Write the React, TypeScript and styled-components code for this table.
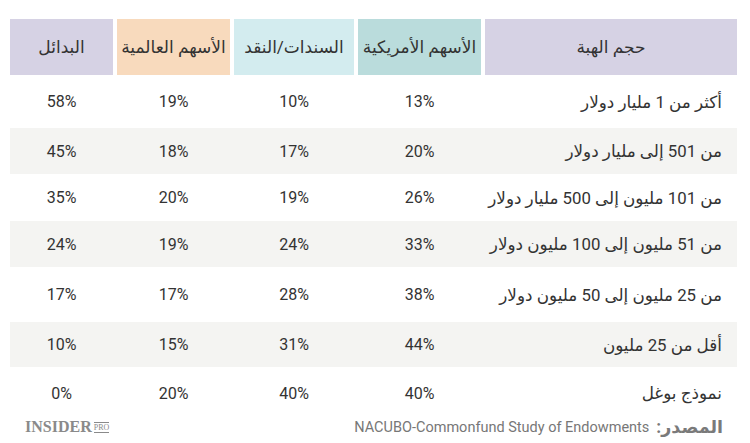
import React from 'react';
import styled, { createGlobalStyle } from 'styled-components';

const GlobalStyle = createGlobalStyle`
    html, body {
        margin: 0;
        padding: 0;
        background: #ffffff;
    }
`;

const COLUMNS = '252px 123px 120px 113px 103px';

const Page = styled.div`
    width: 750px;
    height: 443px;
    box-sizing: border-box;
    padding: 19px 13px 0 10px;
    font-family: Roboto, 'Noto Sans', 'DejaVu Sans', sans-serif;
    color: #333333;
    display: flex;
    flex-direction: column;
`;

const Table = styled.div`
    direction: rtl;
    display: flex;
    flex-direction: column;
`;

const HeaderRow = styled.div`
    display: grid;
    grid-template-columns: ${COLUMNS};
    column-gap: 4px;
    height: 56px;
`;

const HeaderCell = styled.div<{ bg: string }>`
    background: ${p => p.bg};
    display: flex;
    align-items: center;
    justify-content: center;
    font-size: 17px;
    color: #333333;
`;

const Row = styled.div<{ striped?: boolean; h: number }>`
    display: grid;
    grid-template-columns: ${COLUMNS};
    column-gap: 4px;
    height: ${p => p.h}px;
    align-items: center;
    background: ${p => (p.striped ? '#f4f4f2' : 'transparent')};
`;

const Label = styled.div`
    text-align: right;
    padding-right: 15px;
    font-size: 16.8px;
`;

const Value = styled.div`
    direction: ltr;
    text-align: center;
    font-size: 16px;
`;

const Footer = styled.div`
    display: flex;
    align-items: center;
    justify-content: space-between;
    height: 16px;
    padding: 0 14px 0 15px;
`;

const Logo = styled.div`
    display: flex;
    align-items: flex-end;
    gap: 2px;
    color: #8a8a8a;
`;

const LogoWord = styled.span`
    font-family: 'Liberation Serif', 'DejaVu Serif', serif;
    font-weight: bold;
    font-size: 16px;
    line-height: 14px;
`;

const LogoPro = styled.span`
    font-family: 'Liberation Serif', serif;
    font-size: 8px;
    line-height: 8px;
    border-top: 1px solid #8a8a8a;
    border-bottom: 1px solid #8a8a8a;
    padding: 1px 0 0;
    margin-bottom: 1px;
`;

const Source = styled.div`
    direction: rtl;
    font-size: 14.5px;
    color: #777777;
    display: flex;
    gap: 7px;
    align-items: center;
`;

const SourceTag = styled.span`
    font-weight: bold;
    font-size: 17.5px;
    color: #7a7a7a;
`;

const headers = [
    { text: 'حجم الهبة', bg: '#d6d2e4' },
    { text: 'الأسهم الأمريكية', bg: '#badcdc' },
    { text: 'السندات/النقد', bg: '#d3ecef' },
    { text: 'الأسهم العالمية', bg: '#f8dabd' },
    { text: 'البدائل', bg: '#d6d2e4' },
];

const rows = [
    { label: 'أكثر من 1 مليار دولار', values: ['13%', '10%', '19%', '58%'], h: 53 },
    { label: 'من 501 إلى مليار دولار', values: ['20%', '17%', '18%', '45%'], h: 46 },
    { label: 'من 101 مليون إلى 500 مليار دولار', values: ['26%', '19%', '20%', '35%'], h: 47 },
    { label: 'من 51 مليون إلى 100 مليون دولار', values: ['33%', '24%', '19%', '24%'], h: 46 },
    { label: 'من 25 مليون إلى 50 مليون دولار', values: ['38%', '28%', '17%', '17%'], h: 55 },
    { label: 'أقل من 25 مليون', values: ['44%', '31%', '15%', '10%'], h: 45 },
    { label: 'نموذج بوغل', values: ['40%', '40%', '20%', '0%'], h: 52 },
];

const App = () => (
    <Page>
        <GlobalStyle />
        <Table>
            <HeaderRow>
                {headers.map(h => (
                    <HeaderCell key={h.text} bg={h.bg}>
                        {h.text}
                    </HeaderCell>
                ))}
            </HeaderRow>
            {rows.map((r, i) => (
                <Row key={r.label} striped={i % 2 === 1} h={r.h}>
                    <Label>{r.label}</Label>
                    {r.values.map((v, j) => (
                        <Value key={j}>{v}</Value>
                    ))}
                </Row>
            ))}
        </Table>
        <Footer>
            <Logo>
                <LogoWord>INSIDER</LogoWord>
                <LogoPro>PRO</LogoPro>
            </Logo>
            <Source>
                <SourceTag>المصدر:</SourceTag>
                <span>NACUBO-Commonfund Study of Endowments</span>
            </Source>
        </Footer>
    </Page>
);

export default App;
